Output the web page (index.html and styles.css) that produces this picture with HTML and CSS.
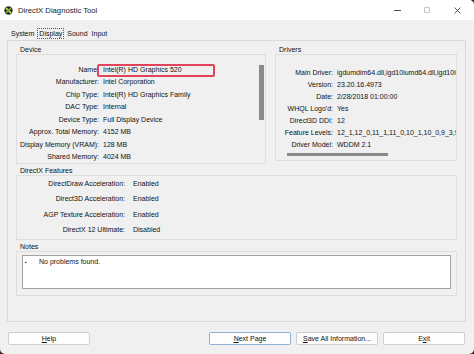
FILE: index.html
```html
<!DOCTYPE html>
<html lang="en">
<head>
    <meta charset="UTF-8">
    <title>DirectX Diagnostic Tool</title>
    <link rel="stylesheet" href="styles.css">
</head>
<body>
<div class="window">
    <!-- 标题栏 -->
    <div class="titlebar">
        <svg class="app-icon" viewBox="0 0 10 10">
            <circle cx="5" cy="5" r="4.6" fill="#2a2a2a"/>
            <path d="M2.6 2.6 L7.4 7.4" stroke="#d6d62a" stroke-width="1.7" stroke-linecap="round"/>
            <path d="M7.4 2.6 L2.6 7.4" stroke="#6bb33a" stroke-width="1.7" stroke-linecap="round"/>
        </svg>
        <span class="title">DirectX Diagnostic Tool</span>
        <div class="controls">
            <span class="ctl"><span class="min"></span></span>
            <span class="ctl"><span class="max"></span></span>
            <span class="ctl">
                <svg width="7" height="7" viewBox="0 0 7 7"><path d="M0.5 0.5 L6.5 6.5 M6.5 0.5 L0.5 6.5" stroke="#333" stroke-width="0.8"/></svg>
            </span>
        </div>
    </div>

    <!-- 选项卡 -->
    <div class="tabs">
        <span class="tab">System</span>
        <span class="tab active"><span class="focus">Display</span></span>
        <span class="tab">Sound</span>
        <span class="tab">Input</span>
    </div>

    <div class="page">
        <div class="top-row">
            <div class="group device">
                <div class="group-title">Device</div>
                <div class="group-body">
                    <div class="rows">
                        <div class="row name-row"><span class="label">Name:</span><span class="value">Intel(R) HD Graphics 520</span><span class="highlight"></span></div>
                        <div class="row"><span class="label">Manufacturer:</span><span class="value">Intel Corporation</span></div>
                        <div class="row"><span class="label">Chip Type:</span><span class="value">Intel(R) HD Graphics Family</span></div>
                        <div class="row"><span class="label">DAC Type:</span><span class="value">Internal</span></div>
                        <div class="row"><span class="label">Device Type:</span><span class="value">Full Display Device</span></div>
                        <div class="row"><span class="label">Approx. Total Memory:</span><span class="value">4152 MB</span></div>
                        <div class="row"><span class="label">Display Memory (VRAM):</span><span class="value">128 MB</span></div>
                        <div class="row"><span class="label">Shared Memory:</span><span class="value">4024 MB</span></div>
                    </div>
                    <div class="vscroll"><div class="thumb"></div></div>
                </div>
            </div>

            <div class="group drivers">
                <div class="group-title">Drivers</div>
                <div class="group-body">
                    <div class="row"><span class="label">Main Driver:</span><span class="value">igdumdim64.dll,igd10iumd64.dll,igd10iumd64.dll,igd12umd64.dll</span></div>
                    <div class="row"><span class="label">Version:</span><span class="value">23.20.16.4973</span></div>
                    <div class="row"><span class="label">Date:</span><span class="value">2/28/2018 01:00:00</span></div>
                    <div class="row"><span class="label">WHQL Logo'd:</span><span class="value">Yes</span></div>
                    <div class="row"><span class="label">Direct3D DDI:</span><span class="value">12</span></div>
                    <div class="row"><span class="label">Feature Levels:</span><span class="value">12_1,12_0,11_1,11_0,10_1,10_0,9_3,9_2,9_1</span></div>
                    <div class="row"><span class="label">Driver Model:</span><span class="value">WDDM 2.1</span></div>
                    <div class="hscroll"></div>
                </div>
            </div>
        </div>

        <div class="group features">
            <div class="group-title">DirectX Features</div>
            <div class="group-body">
                <div class="row"><span class="label">DirectDraw Acceleration:</span><span class="value">Enabled</span></div>
                <div class="row"><span class="label">Direct3D Acceleration:</span><span class="value">Enabled</span></div>
                <div class="row"><span class="label">AGP Texture Acceleration:</span><span class="value">Enabled</span></div>
                <div class="row"><span class="label">DirectX 12 Ultimate:</span><span class="value">Disabled</span></div>
            </div>
        </div>

        <div class="group notes">
            <div class="group-title">Notes</div>
            <div class="group-body">
                <div class="notes-box">
                    <div class="note"><span class="bullet">&#9642;</span>No problems found.</div>
                </div>
            </div>
        </div>
    </div>

    <!-- 底部按钮 -->
    <div class="buttons">
        <span class="btn"><u>H</u>elp</span>
        <span class="btn default push"><u>N</u>ext Page</span>
        <span class="btn"><u>S</u>ave All Information...</span>
        <span class="btn">E<u>x</u>it</span>
    </div>
</div>
</body>
</html>
```

FILE: styles.css
```css
* {
    margin: 0;
    padding: 0;
    box-sizing: border-box;
}
body {
    background: #4a1a12;
    font-family: "Liberation Sans", Arial, sans-serif;
    font-size: 7px;
    color: #111;
}
.window {
    width: 474px;
    height: 354px;
    background: #f0f0f0;
    border-radius: 0 5px 5px 5px;
    overflow: hidden;
}

/* 标题栏 */
.titlebar {
    height: 20px;
    background: #fff;
    display: flex;
    align-items: center;
    padding-left: 4px;
}
.app-icon {
    width: 9px;
    height: 9px;
    margin-right: 5px;
    margin-top: 1px;
}
.title {
    font-size: 7.7px;
    color: #222;
}
.controls {
    margin-left: auto;
    display: flex;
    padding-right: 2px;
}
.ctl {
    width: 30px;
    height: 20px;
    display: flex;
    align-items: center;
    justify-content: center;
}
.min {
    width: 7px;
    height: 1px;
    background: #555;
}
.max {
    width: 6px;
    height: 6px;
    border: 1px solid #c4c4c4;
    border-radius: 1px;
}

/* 选项卡 */
.tabs {
    height: 20px;
    display: flex;
    align-items: flex-end;
    padding-left: 9px;
}
.tab {
    padding: 0 2px;
    line-height: 13px;
}
.focus {
    display: inline-block;
    line-height: 9px;
    padding: 0 1px;
    outline: 1px dotted #555;
    outline-offset: 0;
}

.page {
    height: 282px;
    margin: 0 8px 0 7px;
    border: 1px solid #d9d9d9;
    padding: 5px 8px 0 8px;
}
.top-row {
    display: flex;
    gap: 9px;
}
.group {
    min-width: 0;
}
.group-title {
    line-height: 8px;
    padding-left: 4px;
}
.group-body {
    border: 1px solid #dedede;
}
.row {
    display: flex;
    white-space: nowrap;
}
.label {
    text-align: right;
    flex-shrink: 0;
}
.value {
    margin-left: 4px;
}

/* Device */
.device {
    width: 250px;
    flex-shrink: 0;
}
.device .group-body {
    height: 110px;
    display: flex;
}
.device .rows {
    flex: 1;
    min-width: 0;
    overflow: hidden;
    padding-top: 9px;
}
.device .row {
    line-height: 12.43px;
}
.device .label {
    width: 82px;
}
.name-row {
    position: relative;
}
.highlight {
    position: absolute;
    left: 80px;
    top: 0;
    width: 118px;
    height: 13px;
    border: 2px solid #e2445c;
    border-radius: 2px;
}
.vscroll {
    width: 5px;
    margin-right: 1px;
    padding-top: 10px;
}
.thumb {
    height: 55px;
    background: #8a8a8a;
}

/* Drivers */
.drivers {
    flex: 1;
}
.drivers .group-body {
    height: 107px;
    padding-top: 12px;
    overflow: hidden;
}
.drivers .row {
    line-height: 12px;
}
.drivers .label {
    width: 57px;
}
.hscroll {
    margin: 2px 0 0 11px;
    width: 101px;
    height: 3px;
    background: #8a8a8a;
}

/* DirectX Features */
.features {
    margin-top: 3px;
}
.features .group-body {
    padding-bottom: 2px;
}
.features .row {
    line-height: 15.3px;
}
.features .label {
    width: 108px;
}
.features .value {
    margin-left: 8px;
}

/* Notes */
.notes {
    margin-top: 3px;
}
.notes .group-body {
    padding: 3px 5px 6px;
}
.notes-box {
    height: 34px;
    background: #fff;
    border: 1px solid #a3a3a3;
    padding: 2px 2px;
}
.note {
    line-height: 8px;
}
.bullet {
    display: inline-block;
    width: 14px;
    font-size: 5px;
}

/* 按钮 */
.buttons {
    display: flex;
    gap: 5px;
    margin-top: 10px;
    padding: 0 9px 0 8px;
}
.btn {
    width: 82px;
    height: 13px;
    line-height: 11px;
    text-align: center;
    background: #fdfdfd;
    border: 1px solid #d0d0d0;
    border-radius: 2px;
}
.btn.default {
    border-color: #8fb2d6;
}
.push {
    margin-left: auto;
}
```
